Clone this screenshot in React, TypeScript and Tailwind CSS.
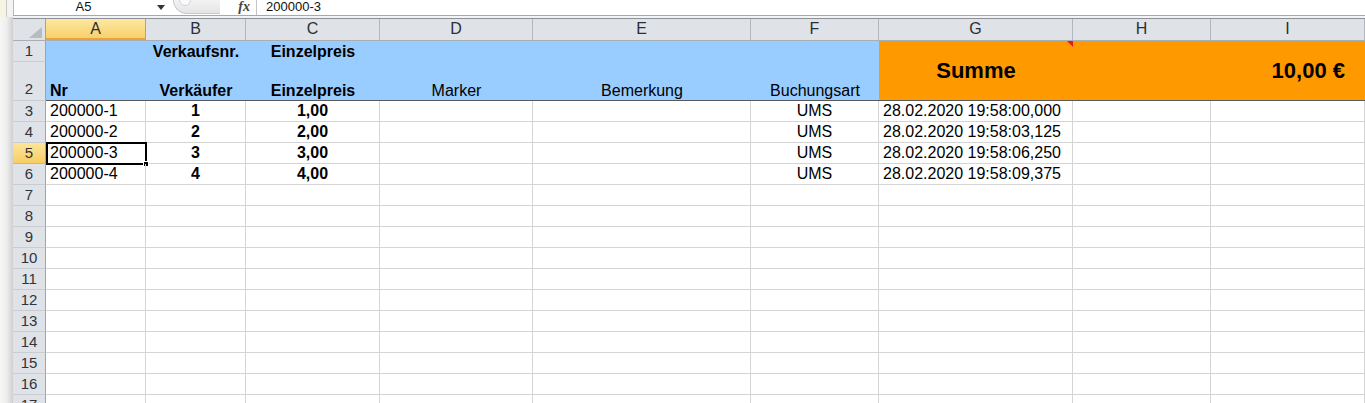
import React from 'react';

// column widths for A..H, I takes the rest
const colWidths = ['w-[100px]', 'w-[100px]', 'w-[134px]', 'w-[153px]', 'w-[218px]', 'w-[128px]', 'w-[194px]', 'w-[138px]'];
const letters = ['A', 'B', 'C', 'D', 'E', 'F', 'G', 'H', 'I'];

const data = [
  { n: 3, a: '200000-1', b: '1', c: '1,00', f: 'UMS', g: '28.02.2020 19:58:00,000' },
  { n: 4, a: '200000-2', b: '2', c: '2,00', f: 'UMS', g: '28.02.2020 19:58:03,125' },
  { n: 5, a: '200000-3', b: '3', c: '3,00', f: 'UMS', g: '28.02.2020 19:58:06,250' },
  { n: 6, a: '200000-4', b: '4', c: '4,00', f: 'UMS', g: '28.02.2020 19:58:09,375' },
];
const emptyRows = [7, 8, 9, 10, 11, 12, 13, 14, 15, 16, 17];

function RowHead({ n, active }: { n: number; active?: boolean }) {
  return (
    <div
      className={`flex h-[21px] w-[33px] shrink-0 items-center justify-center border-b border-r text-[15px] leading-[20px] text-[#30343b] ${
        active
          ? 'border-b-[#e6b25a] border-r-[#e29b2c] bg-gradient-to-b from-[#fde59a] to-[#f8cd62]'
          : 'border-b-[#c9ccd1] border-r-[#9da3ab] bg-[#dfe2e7]'
      }`}
    >
      {n}
    </div>
  );
}

function Cell({ w, children, className = '' }: { w: string; children?: React.ReactNode; className?: string }) {
  return (
    <div className={`${w} h-[21px] shrink-0 truncate border-b border-r border-[#d4d4d4] leading-[20px] ${className}`}>
      {children}
    </div>
  );
}

function FormulaBar() {
  return (
    <div className="flex h-[16px] items-stretch border-b border-[#a5a8ad] bg-white text-[13px] leading-[14px]">
      <div className="w-[140px] border-l border-[#b9b9b9] text-center text-[#111]">A5</div>
      <div className="flex w-[16px] items-start justify-center pt-[5px]">
        <svg width="8" height="5" viewBox="0 0 8 5">
          <polygon points="0,0 8,0 4,5" fill="#333" />
        </svg>
      </div>
      <div className="w-[4px]" />
      <div className="relative h-[14px] w-[47px] overflow-hidden rounded-bl-[14px] border-b border-l border-[#c6c8cc] bg-gradient-to-b from-[#f3f3f3] to-[#e3e4e6]">
        <div className="absolute left-[5px] top-[-6px] h-[12px] w-[12px] rounded-full border border-[#cfd1d4] bg-[#fafafa]" />
      </div>
      <div className="flex w-[37px] items-start justify-end border-r border-[#c2c4c8] pr-[6px]">
        <span className="font-['Liberation_Serif',serif] text-[14px] font-bold italic leading-[13px] text-[#444]">fx</span>
      </div>
      <div className="pl-[9px] text-[#111]">200000-3</div>
    </div>
  );
}

function ColumnHeaders() {
  return (
    <div className="flex h-[23px] border-b border-t border-b-[#a9aeb5] border-t-[#8d9096] bg-[#dfe2e7] text-[16px] leading-[20px] text-[#2b2f36]">
      <div className="flex w-[33px] shrink-0 items-end justify-end border-r border-[#9da3ab] pb-[2px] pr-[3px]">
        <svg width="13" height="11" viewBox="0 0 13 11">
          <polygon points="13,0 13,11 0,11" fill="#b7bcc3" />
        </svg>
      </div>
      {letters.map((l, i) =>
        i === 0 ? (
          <div
            key={l}
            className="w-[100px] shrink-0 border-b-2 border-r border-b-[#e8a33d] border-r-[#e29b2c] bg-gradient-to-b from-[#fde89f] to-[#f9d06a] text-center"
          >
            {l}
          </div>
        ) : (
          <div
            key={l}
            className={`${i < 8 ? colWidths[i] + ' shrink-0' : 'flex-1'} border-r border-[#b3b7bd] text-center`}
          >
            {l}
          </div>
        )
      )}
    </div>
  );
}

function HeaderBlock() {
  return (
    <div className="flex h-[60px]">
      <div className="flex w-[33px] shrink-0 flex-col">
        <div className="flex h-[21px] items-center justify-center border-b border-r border-b-[#c9ccd1] border-r-[#9da3ab] bg-[#dfe2e7] text-[15px] text-[#30343b]">
          1
        </div>
        <div className="flex h-[39px] items-end justify-center border-b border-r border-b-[#c9ccd1] border-r-[#9da3ab] bg-[#dfe2e7] pb-[1px] text-[15px] leading-[20px] text-[#30343b]">
          2
        </div>
      </div>
      <div className="flex w-[833px] shrink-0 flex-col border-b border-[#595959] bg-[#99ccff] text-[16px] text-black">
        <div className="flex h-[21px] font-bold leading-[21px]">
          <div className="w-[100px]" />
          <div className="w-[100px] whitespace-nowrap text-center">Verkaufsnr.</div>
          <div className="w-[134px] text-center">Einzelpreis</div>
        </div>
        <div className="flex flex-1 items-end leading-[18px]">
          <div className="w-[100px] pl-[4px] font-bold">Nr</div>
          <div className="w-[100px] text-center font-bold">Verkäufer</div>
          <div className="w-[134px] text-center font-bold">Einzelpreis</div>
          <div className="w-[153px] text-center">Marker</div>
          <div className="w-[218px] text-center">Bemerkung</div>
          <div className="w-[128px] text-center">Buchungsart</div>
        </div>
      </div>
      <div className="relative flex flex-1 items-center border-b border-[#595959] bg-[#ff9900] text-[22px] font-bold text-black">
        <div className="w-[194px] text-center">Summe</div>
        <div className="flex-1 whitespace-nowrap pr-[20px] text-right">10,00 €</div>
        {/* comment marker */}
        <svg className="absolute left-[188px] top-0" width="6" height="6" viewBox="0 0 6 6">
          <polygon points="0,0 6,0 6,6" fill="#e8162b" />
        </svg>
      </div>
    </div>
  );
}

function DataRow({ r }: { r: (typeof data)[number] }) {
  const active = r.n === 5;
  return (
    <div className="flex text-[16px] text-black">
      <RowHead n={r.n} active={active} />
      <div className="relative">
        <Cell w={colWidths[0]} className="pl-[4px]">
          {r.a}
        </Cell>
        {active && (
          <div className="pointer-events-none absolute -bottom-[1px] -right-[1px] -top-[1px] left-0 border-2 border-black">
            <div className="absolute -bottom-[4px] -right-[4px] h-[6px] w-[6px] border border-white bg-black" />
          </div>
        )}
      </div>
      <Cell w={colWidths[1]} className="text-center font-bold">
        {r.b}
      </Cell>
      <Cell w={colWidths[2]} className="text-center font-bold">
        {r.c}
      </Cell>
      <Cell w={colWidths[3]} />
      <Cell w={colWidths[4]} />
      <Cell w={colWidths[5]} className="text-center">
        {r.f}
      </Cell>
      <Cell w={colWidths[6]} className="whitespace-nowrap pl-[4px]">
        {r.g}
      </Cell>
      <Cell w={colWidths[7]} />
      <Cell w="flex-1" />
    </div>
  );
}

function EmptyRow({ n }: { n: number }) {
  return (
    <div className="flex">
      <RowHead n={n} />
      {colWidths.map((w, i) => (
        <Cell key={i} w={w} />
      ))}
      <Cell w="flex-1" />
    </div>
  );
}

export default function App() {
  return (
    <div className="flex h-[403px] w-full overflow-hidden bg-white font-['Liberation_Sans',Arial,sans-serif]">
      {/* window edge on the left */}
      <div className="flex w-[13px] shrink-0 flex-col">
        <div className="flex h-[17px]">
          <div className="w-[6px] bg-[#f6f5e1]" />
          <div className="w-[1px] bg-[#c7c7c7]" />
          <div className="flex-1 bg-[#f3f3f3]" />
        </div>
        <div className="flex-1 bg-gradient-to-r from-[#f7f7f7] via-[#eeeeee] to-[#cfcfcf]" />
      </div>
      {/* sheet: plain block flow so rows keep their height */}
      <div className="min-w-0 flex-1">
        <FormulaBar />
        <div className="h-[2px] bg-[#f3f4f5]" />
        <ColumnHeaders />
        <HeaderBlock />
        {data.map((r) => (
          <DataRow key={r.n} r={r} />
        ))}
        {emptyRows.map((n) => (
          <EmptyRow key={n} n={n} />
        ))}
      </div>
    </div>
  );
}
